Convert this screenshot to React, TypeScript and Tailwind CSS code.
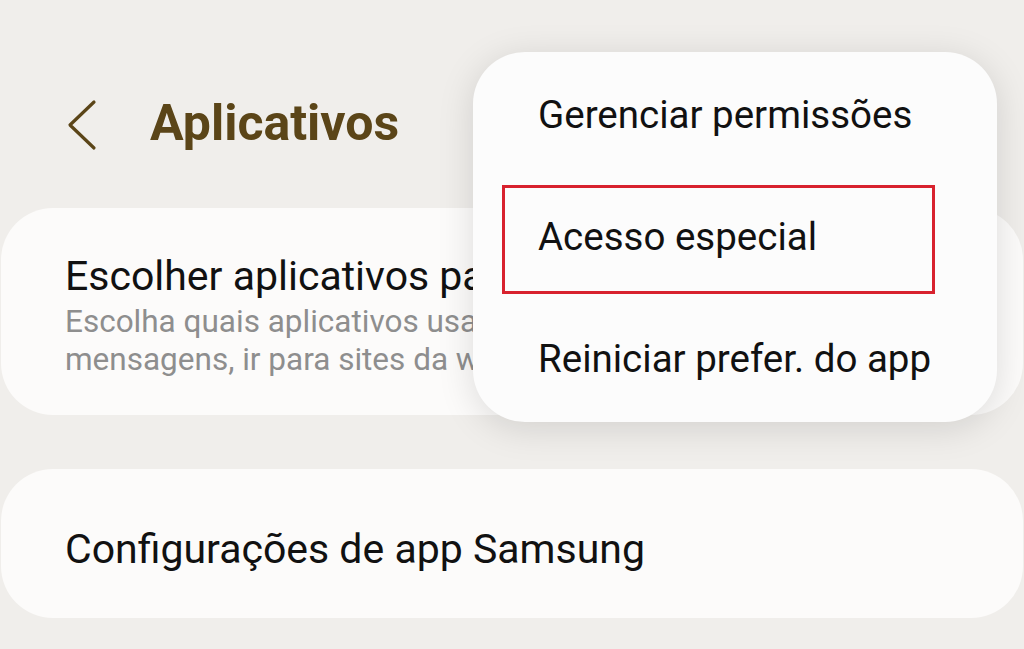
import React from "react";

const font = { fontFamily: "Roboto, 'Noto Sans', sans-serif" };

function BackChevron() {
  return (
    <svg width="34" height="52" viewBox="0 0 34 52" fill="none">
      <path
        d="M28 3 L4 26 L28 49"
        stroke="#5b4518"
        strokeWidth="3.2"
        strokeLinecap="round"
        strokeLinejoin="round"
      />
    </svg>
  );
}

const menuItems = [
  { label: "Gerenciar permissões", marked: false },
  { label: "Acesso especial", marked: true },
  { label: "Reiniciar prefer. do app", marked: false },
];

export default function App() {
  return (
    <main
      className="relative w-[1024px] h-[649px] overflow-hidden bg-[#f0eeeb]"
      style={font}
    >
      {/* header */}
      <div className="h-[208px] flex items-center pl-[66px] pt-[42px] gap-[50px]">
        <BackChevron />
        <h1 className="text-[50px] font-bold text-[#5b4518] leading-none pb-[4px]">
          Aplicativos
        </h1>
      </div>

      <div className="flex flex-col gap-[54px] mx-[1px]">
        <div className="h-[207px] bg-[#fcfbfa] rounded-[52px] pl-[64px] pt-[44px]">
          <p className="text-[41px] text-[#111] leading-[48px]">
            Escolher aplicativos padrão
          </p>
          <p className="text-[31.5px] text-[#8e8e8e] leading-[38px] mt-[3px]">
            Escolha quais aplicativos usar para fazer chamadas, enviar
            <br />
            mensagens, ir para sites da web e mais.
          </p>
        </div>

        <div className="h-[149px] bg-[#fcfbfa] rounded-[52px] pl-[64px] pt-[12px] flex items-center">
          <p className="text-[41px] text-[#111] leading-none">
            Configurações de app Samsung
          </p>
        </div>
      </div>

      {/* overflow menu */}
      <div className="absolute left-[473px] top-[52px] w-[524px] h-[370px] bg-[#fcfcfc] rounded-[52px] shadow-[0_6px_36px_rgba(0,0,0,0.13)] flex flex-col pt-[4px] pl-[29px]">
        {menuItems.map((item) => (
          <div key={item.label} className="h-[123px] flex items-center">
            <div
              className={
                item.marked
                  ? "w-[433px] h-[109px] flex items-center pl-[33px] border-[3px] border-[#d8222e]"
                  : "flex items-center pl-[36px]"
              }
            >
              <span className="text-[38.5px] text-[#111] leading-none pb-[4px]">
                {item.label}
              </span>
            </div>
          </div>
        ))}
      </div>
    </main>
  );
}
